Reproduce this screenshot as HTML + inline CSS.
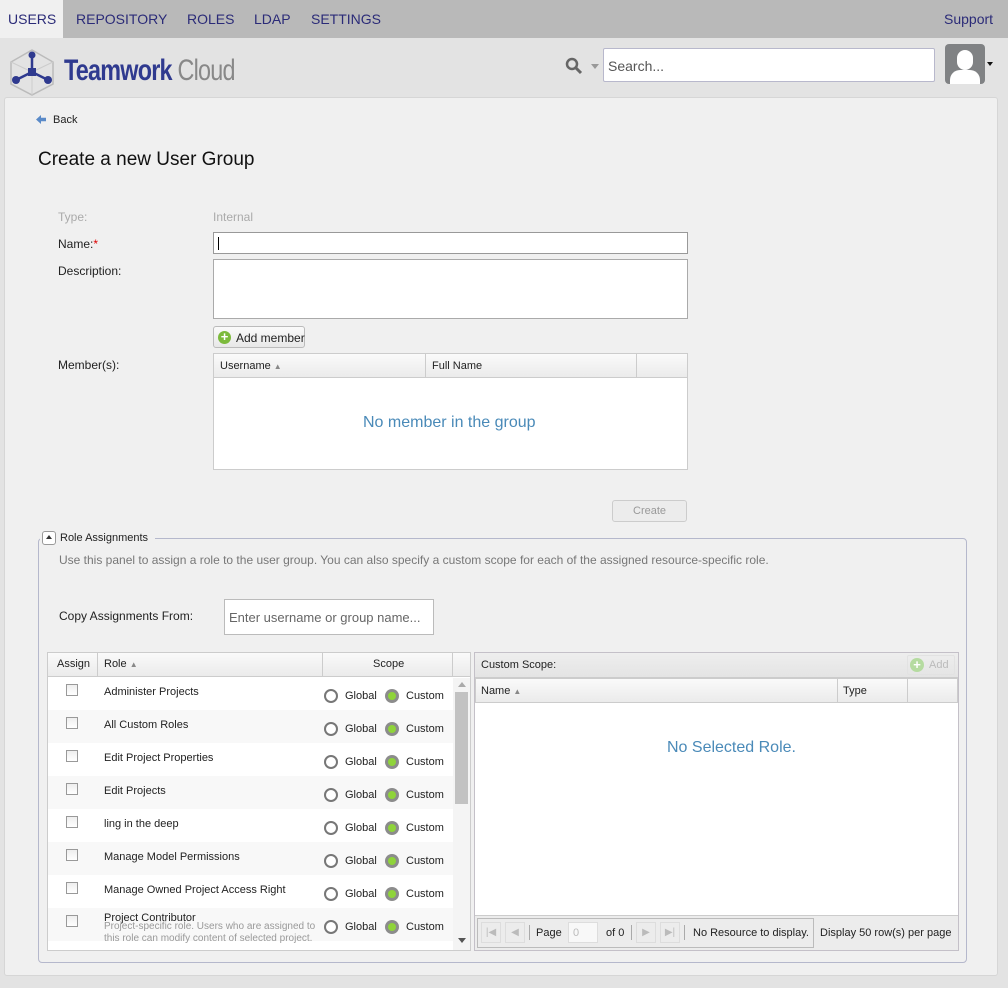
<!DOCTYPE html>
<html><head><meta charset="utf-8"><style>
*{box-sizing:border-box;margin:0;padding:0}
body{width:1008px;height:988px;background:#e3e3e3;font-family:"Liberation Sans",sans-serif;position:relative;overflow:hidden;color:#222}
.a{position:absolute}
.nav{left:0;top:0;width:1008px;height:38px;background:#b9b9b9}
.nav span{position:absolute;top:11px;font-size:14px;color:#2b2b78}
.s12{font-size:12px}
.s11{font-size:11px}
.inp{background:#fff;border:1px solid #aab}
.hdr{background:linear-gradient(#fafafa,#ebebeb);border:1px solid #ccc}
.cb{width:12px;height:12px;border:1px solid #999;background:linear-gradient(#eee,#fff)}
.rad{width:14px;height:14px;border:2px solid #777;border-radius:50%;background:#fff}
.radc{width:14px;height:14px;border-radius:50%;background:#8c8c8c}
.radc:after{content:"";position:absolute;left:3px;top:3px;width:8px;height:8px;border-radius:50%;background:#8fd43a}
</style></head><body>
<div class="a nav">
<div class="a" style="left:0;top:0;width:63px;height:38px;background:#f0f0f0"></div>
<span style="left:8px">USERS</span><span style="left:76px">REPOSITORY</span><span style="left:187px">ROLES</span><span style="left:254px">LDAP</span><span style="left:311px">SETTINGS</span><span style="left:944px">Support</span>
</div>
<svg class="a" style="left:8px;top:48px" width="48" height="48" viewBox="0 0 48 48">
<path d="M24 2 L45 14 L45 36 L24 47 L3 36 L3 14 Z" fill="none" stroke="#bbb" stroke-width="1.5"/>
<path d="M24 24 L24 47 M24 24 L3 14 M24 24 L45 14" stroke="#ccc" stroke-width="1"/>
<path d="M24 7 L24 24 M24 24 L8 32 M24 24 L40 32" stroke="#2f3a8f" stroke-width="2.5"/>
<circle cx="24" cy="7" r="3.5" fill="#2f3a8f"/><circle cx="8" cy="32" r="4" fill="#2f3a8f"/><circle cx="40" cy="32" r="4" fill="#2f3a8f"/>
<rect x="20" y="20" width="8" height="8" fill="#2f3a8f"/>
</svg>
<div class="a" style="left:64px;top:54px;font-size:30px;color:#2f3a8f;letter-spacing:-1px;transform:scaleX(.78);transform-origin:left;white-space:nowrap"><b style="font-weight:600">Teamwork</b> <span style="color:#888">Cloud</span></div>
<svg class="a" style="left:565px;top:57px" width="18" height="18"><circle cx="7" cy="7" r="5" fill="none" stroke="#666" stroke-width="2.5"/><path d="M10.5 10.5 L16 16" stroke="#666" stroke-width="3"/></svg>
<div class="a" style="left:591px;top:64px;border:4px solid transparent;border-top:5px solid #999"></div>
<div class="a inp" style="left:603px;top:48px;width:332px;height:34px;border-radius:2px;border-color:#b8b8cc"><span class="a" style="left:4px;top:9px;font-size:14px;color:#555">Search...</span></div>
<div class="a" style="left:945px;top:44px;width:40px;height:40px;background:#808284;border-radius:4px;overflow:hidden">
<div class="a" style="left:12px;top:6px;width:16px;height:20px;border-radius:8px;background:#fff"></div>
<div class="a" style="left:5px;top:26px;width:30px;height:20px;border-radius:10px 10px 0 0;background:#fff"></div></div>
<div class="a" style="left:987px;top:62px;border:3px solid transparent;border-top:4px solid #111"></div>
<div class="a" style="left:4px;top:97px;width:994px;height:879px;background:#f0f0f0;border:1px solid #d6d6d6;border-radius:3px"></div>
<div class="a" style="left:36px;top:115px;width:10px;height:9px;background:#5a8ac8;clip-path:polygon(0 50%,50% 0,50% 30%,100% 30%,100% 70%,50% 70%,50% 100%)"></div>
<div class="a s11" style="left:53px;top:114px">Back</div>
<div class="a" style="left:38px;top:149px;font-size:19px;color:#111">Create a new User Group</div>
<div class="a s12" style="left:58px;top:210px;color:#aaa">Type:</div>
<div class="a s12" style="left:213px;top:210px;color:#aaa">Internal</div>
<div class="a s12" style="left:58px;top:237px">Name:<span style="color:#d00">*</span></div>
<div class="a inp" style="left:213px;top:232px;width:475px;height:22px;border-color:#999"><div class="a" style="left:4px;top:4px;width:1px;height:13px;background:#000"></div></div>
<div class="a s12" style="left:58px;top:264px">Description:</div>
<div class="a inp" style="left:213px;top:259px;width:475px;height:60px;border-color:#aaa"></div>
<div class="a" style="left:213px;top:326px;width:92px;height:22px;border:1px solid #bbb;border-radius:3px;background:linear-gradient(#fafafa,#e8e8e8)"></div>
<div class="a" style="left:218px;top:331px;width:13px;height:13px;border-radius:50%;background:#7cba3c;color:#fff;font-size:13px;line-height:12px;text-align:center;font-weight:bold">+</div>
<div class="a s12" style="left:236px;top:331px">Add member</div>
<div class="a s12" style="left:58px;top:358px">Member(s):</div>
<div class="a" style="left:213px;top:353px;width:475px;height:117px;background:#fff;border:1px solid #ccc"></div>
<div class="a hdr" style="left:213px;top:353px;width:213px;height:25px"></div>
<div class="a hdr" style="left:425px;top:353px;width:212px;height:25px"></div>
<div class="a hdr" style="left:636px;top:353px;width:52px;height:25px"></div>
<div class="a s11" style="left:220px;top:360px">Username <span style="color:#888;font-size:8px">▲</span></div>
<div class="a s11" style="left:432px;top:360px">Full Name</div>
<div class="a" style="left:363px;top:414px;font-size:16px;color:#4a8ab8">No member in the group</div>
<div class="a" style="left:612px;top:500px;width:75px;height:22px;border:1px solid #ccc;border-radius:3px;background:#ececec"></div>
<div class="a s11" style="left:633px;top:505px;color:#999">Create</div>
<div class="a" style="left:38px;top:538px;width:929px;height:425px;border:1px solid #b5b8cc;border-radius:4px"></div>
<div class="a" style="left:40px;top:530px;width:115px;height:16px;background:#f0f0f0"></div>
<div class="a" style="left:42px;top:531px;width:14px;height:14px;border:1px solid #999;border-radius:3px;background:#fff"><div class="a" style="left:3px;top:3px;border:3px solid transparent;border-bottom:4px solid #333;border-top:0"></div></div>
<div class="a s11" style="left:60px;top:532px">Role Assignments</div>
<div class="a s12" style="left:59px;top:553px;color:#777">Use this panel to assign a role to the user group. You can also specify a custom scope for each of the assigned resource-specific role.</div>
<div class="a s12" style="left:59px;top:609px">Copy Assignments From:</div>
<div class="a inp" style="left:224px;top:599px;width:210px;height:36px;border-color:#bbb"><span class="a" style="left:4px;top:10px;font-size:13px;color:#666">Enter username or group name...</span></div>
<div class="a" style="left:47px;top:652px;width:424px;height:299px;background:#fff;border:1px solid #ccc"></div>
<div class="a hdr" style="left:47px;top:652px;width:51px;height:25px"></div>
<div class="a hdr" style="left:97px;top:652px;width:226px;height:25px"></div>
<div class="a hdr" style="left:322px;top:652px;width:131px;height:25px"></div>
<div class="a hdr" style="left:452px;top:652px;width:19px;height:25px"></div>
<div class="a s11" style="left:57px;top:658px">Assign</div>
<div class="a s11" style="left:104px;top:658px">Role <span style="color:#888;font-size:8px">▲</span></div>
<div class="a s11" style="left:373px;top:658px">Scope</div>
<div class="a" style="left:453px;top:678px;width:17px;height:272px;background:#f4f4f4"></div>
<div class="a" style="left:455px;top:692px;width:13px;height:112px;background:#c2c2c2"></div>
<div class="a" style="left:458px;top:682px;border:4px solid transparent;border-bottom:5px solid #aaa;border-top:0"></div>
<div class="a" style="left:458px;top:938px;border:4px solid transparent;border-top:5px solid #555;border-bottom:0"></div>
<div id="rows"></div>
<div class="a" style="left:474px;top:652px;width:485px;height:299px;background:#fff;border:1px solid #c4c0c8"></div>
<div class="a" style="left:475px;top:653px;width:483px;height:25px;background:linear-gradient(#eee,#e4e4e4);border-bottom:1px solid #ccc"></div>
<div class="a s11" style="left:481px;top:659px">Custom Scope:</div>
<div class="a" style="left:907px;top:655px;width:48px;height:20px;border:1px solid #e2e2e2;border-radius:2px"></div>
<div class="a" style="left:910px;top:658px;width:14px;height:14px;border-radius:50%;background:#b5dba0;color:#fff;font-size:13px;line-height:13px;text-align:center;font-weight:bold">+</div>
<div class="a s11" style="left:929px;top:659px;color:#bbb">Add</div>
<div class="a hdr" style="left:475px;top:678px;width:363px;height:25px"></div>
<div class="a hdr" style="left:837px;top:678px;width:71px;height:25px"></div>
<div class="a hdr" style="left:907px;top:678px;width:51px;height:25px"></div>
<div class="a s11" style="left:481px;top:685px">Name <span style="color:#888;font-size:8px">▲</span></div>
<div class="a s11" style="left:843px;top:685px">Type</div>
<div class="a" style="left:667px;top:739px;font-size:16px;color:#4a8ab8">No Selected Role.</div>
<div class="a" style="left:475px;top:915px;width:483px;height:35px;background:#ececec;border-top:1px solid #ccc"></div>
<div class="a" style="left:477px;top:918px;width:337px;height:30px;border:1px solid #bbb"></div>
<div class="a" style="left:481px;top:922px;width:20px;height:21px;border:1px solid #ddd;color:#bbb;font-size:10px;text-align:center;line-height:20px">|◀</div>
<div class="a" style="left:505px;top:922px;width:20px;height:21px;border:1px solid #ddd;color:#bbb;font-size:10px;text-align:center;line-height:20px">◀</div>
<div class="a" style="left:529px;top:925px;width:1px;height:15px;background:#aaa"></div>
<div class="a s11" style="left:536px;top:927px">Page</div>
<div class="a" style="left:568px;top:922px;width:30px;height:21px;border:1px solid #ddd;background:#f8f8f8"><span class="a s11" style="left:4px;top:4px;color:#bbb">0</span></div>
<div class="a s11" style="left:606px;top:927px">of 0</div>
<div class="a" style="left:631px;top:925px;width:1px;height:15px;background:#aaa"></div>
<div class="a" style="left:636px;top:922px;width:20px;height:21px;border:1px solid #ddd;color:#bbb;font-size:10px;text-align:center;line-height:20px">▶</div>
<div class="a" style="left:660px;top:922px;width:20px;height:21px;border:1px solid #ddd;color:#bbb;font-size:10px;text-align:center;line-height:20px">▶|</div>
<div class="a" style="left:684px;top:925px;width:1px;height:15px;background:#aaa"></div>
<div class="a s11" style="left:693px;top:927px">No Resource to display.</div>
<div class="a s11" style="left:820px;top:927px">Display 50 row(s) per page</div>
<script>
var r=["Administer Projects","All Custom Roles","Edit Project Properties","Edit Projects","ling in the deep","Manage Model Permissions","Manage Owned Project Access Right","Project Contributor"],h="";
for(var i=0;i<8;i++){var y=677+i*33;
h+='<div class="a" style="left:48px;top:'+y+'px;width:405px;height:33px;background:'+(i%2?'#f8f8f8':'#fff')+'"></div>';
h+='<div class="a cb" style="left:66px;top:'+(y+7)+'px"></div>';
h+='<div class="a s11" style="left:104px;top:'+(i==7?y+4:y+9)+'px">'+r[i]+'</div>';
h+='<div class="a rad" style="left:324px;top:'+(y+12)+'px"></div><div class="a s11" style="left:345px;top:'+(y+13)+'px">Global</div>';
h+='<div class="a radc" style="left:385px;top:'+(y+12)+'px"></div><div class="a s11" style="left:406px;top:'+(y+13)+'px">Custom</div>';}
h+='<div class="a" style="left:104px;top:921px;font-size:10px;line-height:12px;color:#999">Project-specific role. Users who are assigned to<br>this role can modify content of selected project.</div>';
document.getElementById("rows").innerHTML=h;
</script>
</body></html>
